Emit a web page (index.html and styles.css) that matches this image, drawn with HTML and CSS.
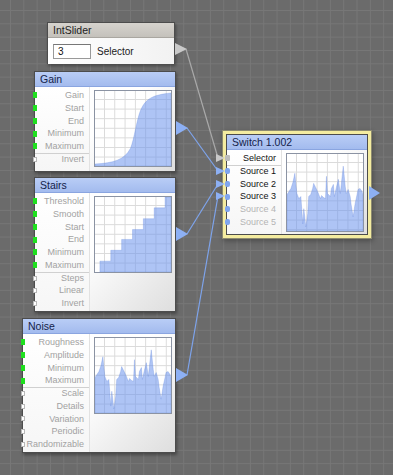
FILE: index.html
```html
<!DOCTYPE html>
<html lang="en">
<head>
  <meta charset="UTF-8" />
  <meta name="viewport" content="width=device-width, initial-scale=1.0" />
  <title>Patch Editor</title>
  <link rel="stylesheet" href="styles.css">
</head>
<body>
  <div class="canvas">

    <!-- IntSlider -->
    <div class="node node-slider">
      <div class="node-head">IntSlider</div>
      <div class="slider-body">
        <div class="slider-value">3</div>
        <span class="slider-label">Selector</span>
      </div>
    </div>

    <!-- Gain -->
    <div class="node node-gain">
      <div class="node-head blue">Gain</div>
      <div class="node-body">
        <ul class="ports">
          <li class="on">Gain</li>
          <li class="on">Start</li>
          <li class="on">End</li>
          <li class="on">Minimum</li>
          <li class="on">Maximum</li>
          <li class="off first-off">Invert</li>
        </ul>
        <div class="plot-col">
          <svg class="plot" viewBox="0 0 77 76" preserveAspectRatio="none">
            <path class="area" d="M0,76 L0,74 C18,73 30,70 36,58 C40,48 42,30 46,20 C51,8 58,4 77,2 L77,76 Z" />
          </svg>
        </div>
      </div>
    </div>

    <!-- Stairs -->
    <div class="node node-stairs">
      <div class="node-head blue">Stairs</div>
      <div class="node-body">
        <ul class="ports">
          <li class="on">Threshold</li>
          <li class="on">Smooth</li>
          <li class="on">Start</li>
          <li class="on">End</li>
          <li class="on">Minimum</li>
          <li class="on">Maximum</li>
          <li class="off first-off">Steps</li>
          <li class="off">Linear</li>
          <li class="off">Invert</li>
        </ul>
        <div class="plot-col">
          <svg class="plot" viewBox="0 0 77 76" preserveAspectRatio="none">
            <path class="area" d="M5,76 V65 H16 V54 H27 V43 H38 V33 H49 V22 H60 V11 H71 V0 H77 V76 Z" />
          </svg>
        </div>
      </div>
    </div>

    <!-- Noise -->
    <div class="node node-noise">
      <div class="node-head blue">Noise</div>
      <div class="node-body">
        <ul class="ports">
          <li class="on">Roughness</li>
          <li class="on">Amplitude</li>
          <li class="on">Minimum</li>
          <li class="on">Maximum</li>
          <li class="off first-off">Scale</li>
          <li class="off">Details</li>
          <li class="off">Variation</li>
          <li class="off">Periodic</li>
          <li class="off">Randomizable</li>
        </ul>
        <div class="plot-col">
          <svg class="plot" viewBox="0 0 77 76" preserveAspectRatio="none">
            <path class="area" d="M0,76 L0,40 L2,37 L4,34 L6,28 L8,19 L9,30 L10,39 L12,44 L14,42 L15,55 L16,69 L17,54 L18,62 L19,72 L20,66 L21,59 L22,42 L24,40 L26,34 L27,29 L29,33 L31,37 L33,42 L34,44 L35,41 L37,43 L39,44 L40,22 L41,39 L43,41 L44,42 L45,34 L47,30 L48,42 L50,33 L52,25 L54,39 L55,30 L57,12 L58,22 L59,32 L60,39 L62,35 L64,42 L65,50 L67,62 L69,49 L71,40 L72,35 L74,34 L76,37 L77,40 L77,76 Z" />
          </svg>
        </div>
      </div>
    </div>

    <!-- Switch -->
    <div class="node node-switch">
      <div class="node-head blue">Switch 1.002</div>
      <div class="node-body">
        <ul class="ports">
          <li class="sel">Selector</li>
          <li class="src first-off">Source 1</li>
          <li class="src">Source 2</li>
          <li class="src">Source 3</li>
          <li class="src idle">Source 4</li>
          <li class="src idle">Source 5</li>
        </ul>
        <div class="plot-col">
          <svg class="plot plot-wide" viewBox="0 0 77 76" preserveAspectRatio="none">
            <path class="area" d="M0,76 L0,40 L2,37 L4,34 L6,28 L8,19 L9,30 L10,39 L12,44 L14,42 L15,55 L16,69 L17,54 L18,62 L19,72 L20,66 L21,59 L22,42 L24,40 L26,34 L27,29 L29,33 L31,37 L33,42 L34,44 L35,41 L37,43 L39,44 L40,22 L41,39 L43,41 L44,42 L45,34 L47,30 L48,42 L50,33 L52,25 L54,39 L55,30 L57,12 L58,22 L59,32 L60,39 L62,35 L64,42 L65,50 L67,62 L69,49 L71,40 L72,35 L74,34 L76,37 L77,40 L77,76 Z" />
          </svg>
        </div>
      </div>
    </div>

    <!-- wires and port arrows -->
    <svg class="wires" width="393" height="475" viewBox="0 0 393 475">
      <line class="wire grey" x1="186" y1="49" x2="218" y2="158" />
      <line class="wire" x1="187" y1="128" x2="218" y2="171" />
      <line class="wire" x1="187" y1="234" x2="218" y2="184" />
      <line class="wire" x1="187" y1="375" x2="218" y2="196" />

      <polygon class="arrow grey" points="175,43 187,49 175,55" />
      <polygon class="arrow" points="176,121 188,128 176,135" />
      <polygon class="arrow" points="176,227 188,234 176,241" />
      <polygon class="arrow" points="176,368 188,375 176,382" />
      <polygon class="arrow" points="369,186 380,193 369,200" />

      <polygon class="arrow grey" points="216,154 225,158 216,162" />
      <polygon class="arrow" points="216,167 225,171 216,175" />
      <polygon class="arrow" points="216,180 225,184 216,188" />
      <polygon class="arrow" points="216,192 225,196 216,200" />
    </svg>
  </div>
</body>
</html>
```

FILE: styles.css
```css
/* General */
body {
  margin: 0;
  padding: 0;
  font-family: 'Liberation Sans', Arial, sans-serif;
}

.canvas {
  position: relative;
  width: 393px;
  height: 475px;
  overflow: hidden;
  background-color: #6b6b6b;
  background-image:
    linear-gradient(to right, #777 1px, transparent 1px),
    linear-gradient(to bottom, #777 1px, transparent 1px);
  background-size: 13.33px 13.33px;
  background-position: 10px 10px;
}

/* Nodes */
.node {
  position: absolute;
  box-sizing: border-box;
  background: #fff;
  border: 1px solid #4c4c4c;
  box-shadow: 1px 2px 3px rgba(0, 0, 0, 0.35);
}

.node-slider { left: 47px; top: 22px; width: 128px; height: 42px; }
.node-gain { left: 34px; top: 71px; width: 142px; height: 101px; }
.node-stairs { left: 34px; top: 177px; width: 142px; height: 135px; }
.node-noise { left: 22px; top: 318px; width: 154px; height: 135px; }

.node-switch {
  left: 226px;
  top: 134px;
  width: 142px;
  height: 101px;
  box-shadow: 0 0 0 3px #f4eca0, 0 0 0 4px #8c8a70, 1px 2px 5px 4px rgba(0, 0, 0, 0.3);
}

.node-head {
  height: 14px;
  line-height: 14px;
  padding-left: 5px;
  font-size: 10.5px;
  color: #222;
  background: linear-gradient(#d6d3ce, #c4c1bb);
  border-bottom: 1px solid #a9a6a0;
}

.node-head.blue {
  color: #14224a;
  background: linear-gradient(#b9cdf6, #a3bbee);
  border-bottom: 1px solid #8aa5e0;
}

.node-body {
  display: flex;
  height: calc(100% - 15px);
}

/* IntSlider */
.slider-body {
  display: flex;
  align-items: center;
  gap: 6px;
  height: 26px;
  padding-left: 5px;
  background: linear-gradient(to right, #fff, #f2f2f2);
}

.slider-value {
  box-sizing: border-box;
  width: 38px;
  height: 15px;
  line-height: 13px;
  padding-left: 4px;
  font-size: 10px;
  color: #111;
  background: #fff;
  border: 1px solid #999;
  border-top-color: #777;
}

.slider-label {
  font-size: 10px;
  color: #222;
}

/* Port list */
.ports {
  list-style: none;
  margin: 0;
  padding: 2px 0 0 0;
  width: 55px;
  border-right: 1px solid #e2e2e2;
  background: linear-gradient(to bottom, #fff, #f6f6f6);
}

.node-noise .ports {
  width: 67px;
}

.ports li {
  position: relative;
  height: 12.75px;
  line-height: 12.75px;
  padding-right: 5px;
  text-align: right;
  font-size: 9px;
  color: #a2a2a2;
}

.ports li.first-off {
  border-top: 1px solid #d0d0d0;
  height: 11.75px;
  line-height: 11.75px;
}

.ports li::before {
  content: "";
  position: absolute;
  left: -2px;
  top: 50%;
  box-sizing: border-box;
}

.ports li.on::before {
  width: 4px;
  height: 6px;
  margin-top: -3px;
  background: #1fe01f;
}

.ports li.off::before {
  width: 4px;
  height: 5px;
  margin-top: -2.5px;
  background: #fff;
  border: 1px solid #b8b8b8;
}

.ports li.sel,
.ports li.src {
  color: #111;
}

.ports li.idle {
  color: #b4b4b4;
}

.ports li.sel::before {
  width: 5px;
  height: 6px;
  margin-top: -3px;
  border-radius: 1px;
  background: #bdbdbd;
}

.ports li.src::before {
  width: 5px;
  height: 6px;
  margin-top: -3px;
  border-radius: 2px;
  background: #7fa5ef;
}

.ports li.src.first-off::before {
  margin-top: -3.5px;
}

/* Plot */
.plot-col {
  flex: 1;
  padding: 3px 3px 0 4px;
  background: linear-gradient(135deg, #ffffff 30%, #dedede);
}

.plot {
  display: block;
  box-sizing: border-box;
  width: 78px;
  height: 77px;
  border: 1px solid #8b93a3;
  background-color: #fff;
  background-image:
    linear-gradient(to right, #dadada 1px, transparent 1px),
    linear-gradient(to bottom, #dadada 1px, transparent 1px);
  background-size: 10.3px 9.6px;
  background-position: 9px 8px;
}

.plot-wide {
  height: 79px;
}

.area {
  fill: rgba(108, 148, 236, 0.55);
  stroke: rgba(100, 135, 220, 0.6);
  stroke-width: 0.5;
}

/* Wires */
.wires {
  position: absolute;
  left: 0;
  top: 0;
  pointer-events: none;
}

.wire {
  stroke: #7ea4ec;
  stroke-width: 1.2;
}

.wire.grey {
  stroke: #a9a9a9;
}

.arrow {
  fill: #8db0f4;
}

.arrow.grey {
  fill: #c9c9c9;
}
```
